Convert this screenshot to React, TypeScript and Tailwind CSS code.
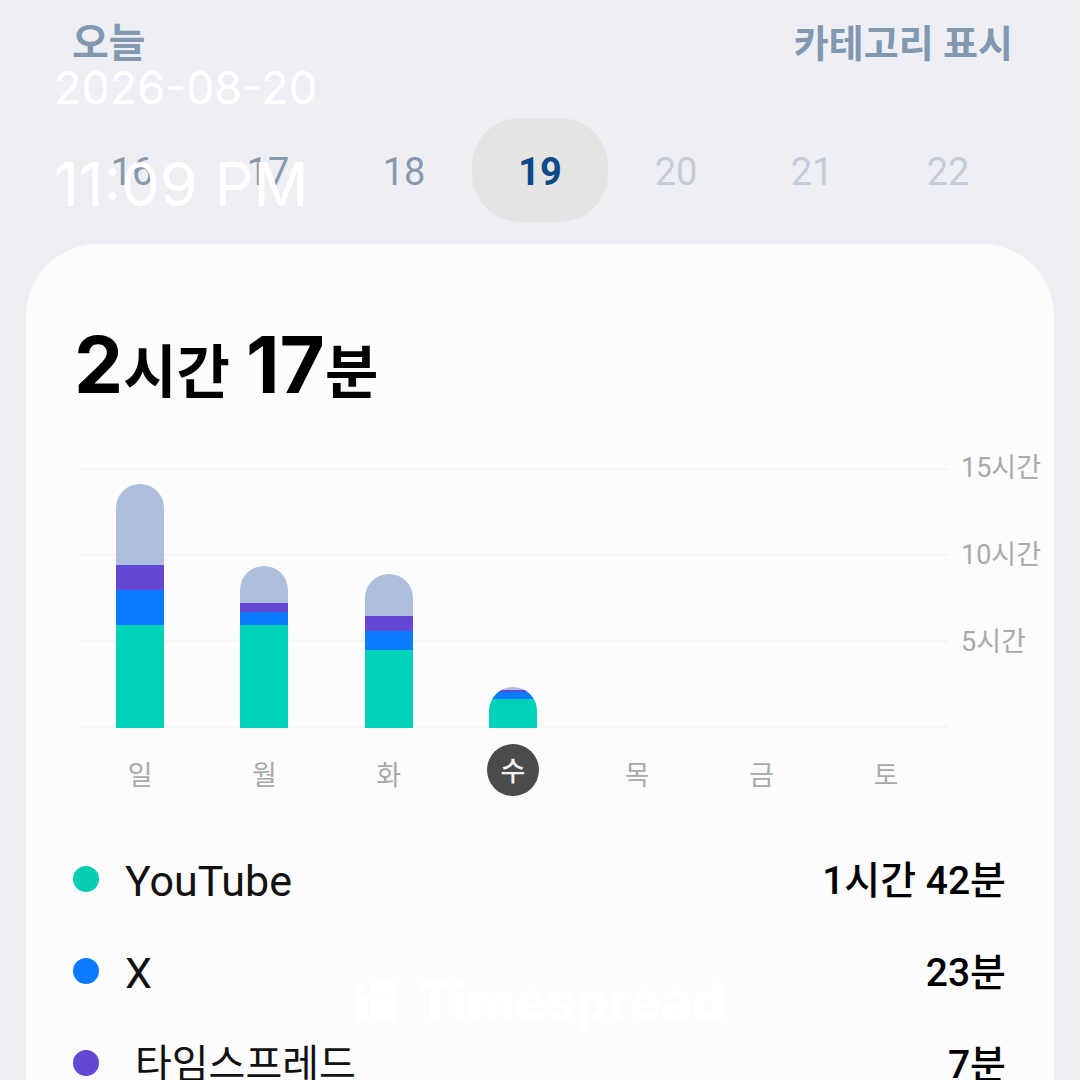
import clsx from 'clsx'

type AppKey = 'youtube' | 'x' | 'timespread' | 'other'

interface DayUsage {
  label: string
  minutes: Record<AppKey, number>
}

const MAX_MINUTES = 15 * 60
const SELECTED_DATE = 19
const SELECTED_DAY = '수'

const DATES = [16, 17, 18, 19, 20, 21, 22]
const AXIS = ['15시간', '10시간', '5시간']

const NONE = { other: 0, timespread: 0, x: 0, youtube: 0 }

const WEEK: DayUsage[] = [
  { label: '일', minutes: { other: 281, timespread: 88, x: 121, youtube: 356 } },
  { label: '월', minutes: { other: 128, timespread: 32, x: 46, youtube: 355 } },
  { label: '화', minutes: { other: 145, timespread: 54, x: 65, youtube: 270 } },
  { label: '수', minutes: { other: 10, timespread: 7, x: 23, youtube: 102 } },
  { label: '목', minutes: NONE },
  { label: '금', minutes: NONE },
  { label: '토', minutes: NONE },
]

// top to bottom
const STACK: { key: AppKey; color: string }[] = [
  { key: 'other', color: 'bg-[#aebfdc]' },
  { key: 'timespread', color: 'bg-[#6448d3]' },
  { key: 'x', color: 'bg-[#0a7bff]' },
  { key: 'youtube', color: 'bg-[#00d2b8]' },
]

const APPS = [
  { name: 'YouTube', time: '1시간 42분', color: 'bg-[#06cdb3]' },
  { name: 'X', time: '23분', color: 'bg-[#0a7bff]' },
  { name: '타임스프레드', time: '7분', color: 'bg-[#6448d3]', korean: true },
]

function DateStrip() {
  return (
    <nav className="mt-[46px] grid shrink-0 grid-cols-7 px-16">
      {DATES.map((date) => (
        <button
          key={date}
          type="button"
          className={clsx(
            'h-[104px] rounded-[48px] pt-1 text-[38px]',
            date === SELECTED_DATE && 'bg-[#e4e4e5] font-bold text-[#0d4a86]',
            date < SELECTED_DATE && 'text-[#8799ae]',
            date > SELECTED_DATE && 'text-[#c3cdd9]'
          )}
        >
          {date}
        </button>
      ))}
    </nav>
  )
}

function Bar({ minutes }: { minutes: Record<AppKey, number> }) {
  const total = STACK.reduce((sum, s) => sum + minutes[s.key], 0)

  return (
    <div
      className="flex w-12 flex-col overflow-hidden rounded-t-full rounded-b-xs"
      style={{ height: `${(total / MAX_MINUTES) * 100}%` }}
    >
      {STACK.map((s) => (
        <div key={s.key} className={s.color} style={{ flex: `${minutes[s.key]} 0 0` }} />
      ))}
    </div>
  )
}

function UsageChart() {
  return (
    <section className="mt-[58px] flex pl-[52px]">
      <div className="flex-1">
        <div className="grid h-[260px]">
          <div className="col-start-1 row-start-1 flex flex-col justify-between">
            {[0, 1, 2, 3].map((line) => (
              <div key={line} className="h-[2px] bg-[#f5f5f5]" />
            ))}
          </div>
          <div className="col-start-1 row-start-1 grid grid-cols-7 items-end justify-items-center">
            {WEEK.map((day) => (
              <Bar key={day.label} minutes={day.minutes} />
            ))}
          </div>
        </div>
        <div className="mt-4 grid grid-cols-7 justify-items-center">
          {WEEK.map((day) => (
            <span
              key={day.label}
              className={clsx(
                'flex size-[52px] items-center justify-center rounded-full text-[27px]',
                day.label === SELECTED_DAY
                  ? 'bg-[#4b4b4b] pt-1 font-medium text-[#f4f4f4]'
                  : 'pt-3 text-[#a9a9a9]'
              )}
            >
              {day.label}
            </span>
          ))}
        </div>
      </div>
      <div className="-mt-[43px] w-[106px] pl-[13px]">
        {AXIS.map((label) => (
          <div key={label} className="flex h-[87px] items-center text-[27px] text-[#a9a9a9]">
            {label}
          </div>
        ))}
      </div>
    </section>
  )
}

function AppList() {
  return (
    <ul className="mt-[37px] pr-12 pl-[47px]">
      {APPS.map((app) => (
        <li key={app.name} className="flex h-[92px] items-center">
          <span className={clsx('size-[26px] rounded-full', app.color)} />
          <span
            className={clsx(
              'flex-1 pt-1 text-[#111]',
              app.korean ? 'pl-9 text-[40px]' : 'pl-[26px] text-[43px]'
            )}
          >
            {app.name}
          </span>
          <span className="pt-1 text-[39px] font-medium text-black">{app.time}</span>
        </li>
      ))}
    </ul>
  )
}

function Watermark() {
  return (
    <div className="absolute inset-x-0 top-[972px] flex items-center justify-center gap-5 text-white">
      <svg width="42" height="40" viewBox="0 0 42 40" fill="currentColor" aria-hidden="true">
        <circle cx="6" cy="6" r="5.5" />
        <rect x="15" width="27" height="12" />
        <rect y="14" width="12" height="26" />
        <rect x="15" y="14" width="27" height="26" />
      </svg>
      <span className="font-['Inter',sans-serif] text-[52px] leading-[60px] font-extrabold">
        Timespread
      </span>
    </div>
  )
}

export default function App() {
  return (
    <div className="relative flex h-screen flex-col overflow-hidden bg-[#eeeff4] font-['Roboto','Noto_Sans_CJK_KR',sans-serif] leading-none">
      <header className="flex h-[72px] shrink-0 items-center justify-between pt-4 pr-[67px] pl-[72px] font-bold text-[#8198b0]">
        <button type="button" className="text-[40px]">
          오늘
        </button>
        <button type="button" className="text-[38px]">
          카테고리 표시
        </button>
      </header>

      <DateStrip />

      <main className="mx-[26px] mt-[22px] flex-1 rounded-t-[72px] bg-[#fcfcfc] pt-[82px]">
        <h1 className="flex h-[84px] items-baseline pl-12 font-['Inter','Noto_Sans_CJK_KR',sans-serif] text-[78px] font-bold text-black">
          <span>2</span>
          <span className="text-[58px]">시간</span>
          <span className="pl-4">17</span>
          <span className="text-[58px]">분</span>
        </h1>
        <UsageChart />
        <AppList />
      </main>

      <div className="absolute top-[60px] left-[54px] font-['Inter',sans-serif] text-white">
        <p className="text-[45px] leading-14">2026-08-20</p>
        <p className="mt-[30px] text-[61px] leading-[76px]">11:09 PM</p>
      </div>

      <Watermark />
    </div>
  )
}
